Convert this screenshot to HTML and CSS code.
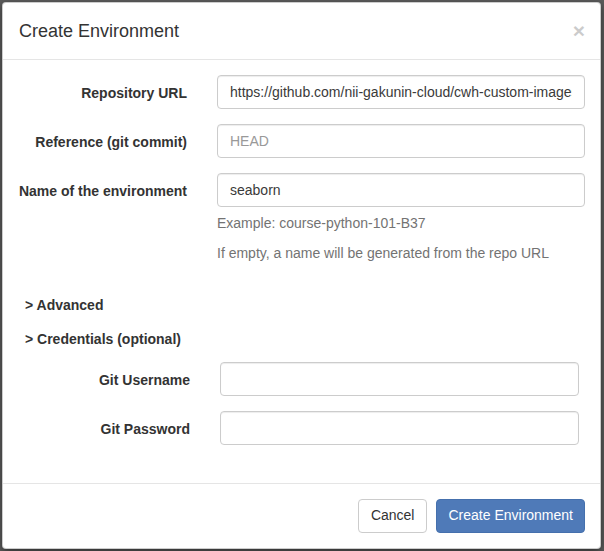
FILE: index.html
```html
<!DOCTYPE html>
<html>
<head>
<meta charset="utf-8">
<link rel="stylesheet" href="styles.css">
</head>
<body>
<div class="modal">
  <div class="modal-header">
    <h4 class="modal-title">Create Environment</h4>
    <button class="close" type="button">×</button>
  </div>
  <div class="modal-body">
    <div class="form-group">
      <label class="control-label">Repository URL</label>
      <div class="control">
        <input class="form-control" type="text" value="https://github.com/nii-gakunin-cloud/cwh-custom-images">
      </div>
    </div>
    <div class="form-group">
      <label class="control-label">Reference (git commit)</label>
      <div class="control">
        <input class="form-control" type="text" placeholder="HEAD">
      </div>
    </div>
    <div class="form-group">
      <label class="control-label">Name of the environment</label>
      <div class="control">
        <input class="form-control" type="text" value="seaborn">
        <p class="help-block">Example: course-python-101-B37</p>
        <p class="help-block">If empty, a name will be generated from the repo URL</p>
      </div>
    </div>
    <div class="toggle">&gt; Advanced</div>
    <div class="toggle">&gt; Credentials (optional)</div>
    <div class="creds">
      <div class="cred-group">
        <label class="control-label">Git Username</label>
        <input class="form-control" type="text">
      </div>
      <div class="cred-group">
        <label class="control-label">Git Password</label>
        <input class="form-control" type="password">
      </div>
    </div>
  </div>
  <div class="modal-footer">
    <button class="btn btn-default" type="button">Cancel</button>
    <button class="btn btn-primary" type="button">Create Environment</button>
  </div>
</div>
</body>
</html>
```

FILE: styles.css
```css
* { box-sizing: border-box; }
html, body { margin: 0; padding: 0; }
body {
  background: #5c5c5c;
  font-family: "Liberation Sans", Arial, Helvetica, sans-serif;
  font-size: 14px;
  line-height: 1.42857;
  color: #333;
  width: 604px;
  height: 551px;
  overflow: hidden;
}
.modal {
  margin: 2px 0 0 2px;
  width: 599px;
  background: #fff;
  border: 1px solid rgba(0,0,0,.2);
  border-radius: 4px;
  box-shadow: 0 3px 9px rgba(0,0,0,.5);
}
.modal-header {
  padding: 15px 15px 15px 16px;
  border-bottom: 1px solid #e5e5e5;
  display: flex;
  justify-content: space-between;
  align-items: flex-start;
}
.modal-title {
  margin: 1px 0 -1px;
  font-size: 18px;
  font-weight: 500;
  line-height: 1.42857;
  color: #333;
}
.close {
  background: none;
  border: 0;
  padding: 0;
  margin-top: 2px;
  font-family: "Liberation Sans", Arial, sans-serif;
  font-size: 21px;
  font-weight: bold;
  line-height: 1;
  color: #000;
  opacity: .2;
  cursor: pointer;
}
.modal-body {
  padding: 15px 15px 38px 15px;
}
.form-group {
  display: grid;
  grid-template-columns: 169px 1fr;
  column-gap: 30px;
  margin-bottom: 15px;
}
.control-label {
  text-align: right;
  font-weight: bold;
  padding-top: 9px;
}
.form-control {
  display: block;
  width: 100%;
  height: 34px;
  padding: 6px 12px;
  font-family: "Liberation Sans", Arial, sans-serif;
  font-size: 14px;
  line-height: 1.42857;
  color: #3a3a3a;
  background: #fff;
  border: 1px solid #ccc;
  border-radius: 4px;
  box-shadow: inset 0 1px 1px rgba(0,0,0,.075);
}
.form-control::placeholder { color: #999; }
.help-block {
  margin: 7px 0 10px;
  color: #737373;
}
.help-block + .help-block { margin-top: 0; }
.toggle {
  font-weight: bold;
  padding: 7px 0 7px 7px;
}
.creds {
  padding: 5px 6px 0 0;
}
.cred-group {
  display: grid;
  grid-template-columns: 172px 1fr;
  column-gap: 30px;
  margin-bottom: 15px;
}
.cred-group:last-child { margin-bottom: 0; }
.modal-footer {
  padding: 15px;
  border-top: 1px solid #e5e5e5;
  display: flex;
  justify-content: flex-end;
  gap: 9px;
}
.btn {
  display: inline-block;
  height: 34px;
  padding: 6px 12px;
  font-family: "Liberation Sans", Arial, sans-serif;
  font-size: 14px;
  line-height: 1.42857;
  border: 1px solid transparent;
  border-radius: 4px;
  cursor: pointer;
}
.btn-default {
  color: #333;
  background: #fff;
  border-color: #ccc;
}
.btn-primary {
  color: #fff;
  background: #4f7ab8;
  border-color: #4570ad;
  padding-left: 11px;
  padding-right: 11px;
}
```
